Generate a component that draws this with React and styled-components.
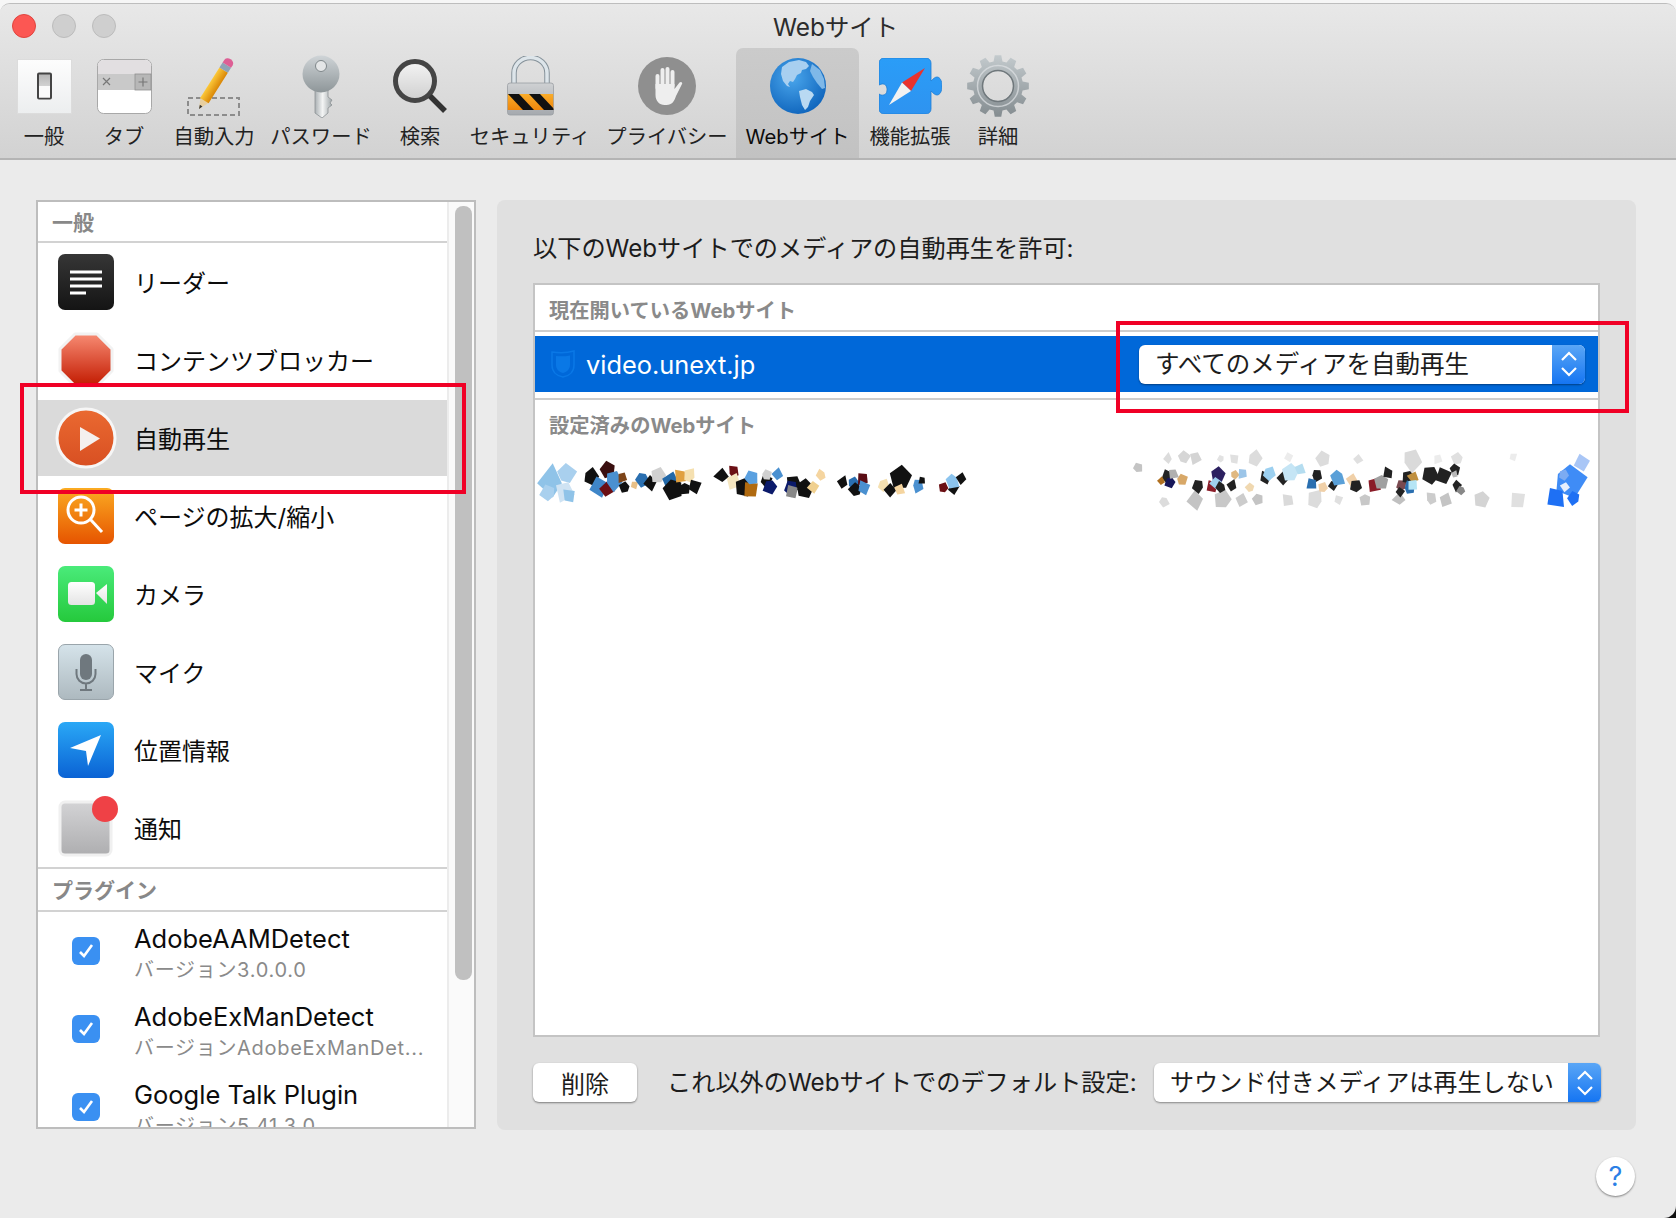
import React from "react";
import styled, { createGlobalStyle } from "styled-components";

const GlobalStyle = createGlobalStyle`
  html, body {
    margin: 0;
    padding: 0;
    background: #fff;
  }
  body {
    font-family: Inter, "Noto Sans CJK JP", sans-serif;
    color: #1c1c1c;
  }
  * {
    box-sizing: border-box;
  }
`;

const Page = styled.div`
  width: 1676px;
  height: 1218px;
  padding-top: 3px;
  background: linear-gradient(#f6f6f6 50%, #111 50%);
`;

const Window = styled.div`
  position: relative;
  height: 1215px;
  background: #ebebeb;
  border-top: 1px solid #bdbdbd;
  border-radius: 10px 10px 12px 0;
  overflow: hidden;
`;

const Toolbar = styled.header`
  height: 156px;
  background: linear-gradient(#e8e8e8, #d2d2d2);
  border-bottom: 2px solid #b4b4b4;
`;

const TitleRow = styled.div`
  position: relative;
  height: 44px;
  display: flex;
  align-items: center;
  justify-content: center;
`;

const TrafficLights = styled.div`
  position: absolute;
  left: 12px;
  top: 10px;
  display: flex;
  gap: 16px;
`;

const Light = styled.span`
  width: 24px;
  height: 24px;
  border-radius: 50%;
  background: ${(p) => (p.$close ? "#fc5753" : "#cfcfcf")};
  border: 1px solid ${(p) => (p.$close ? "#e0443e" : "#bcbcbc")};
`;

const Title = styled.h1`
  margin: 2px 0 0 -5px;
  font-size: 24.4px;
  font-weight: 400;
  line-height: 30px;
  color: #2c2c2c;
`;

const Tabs = styled.nav`
  display: flex;
  padding-left: 4px;
`;

const Tab = styled.div`
  width: ${(p) => p.$w}px;
  height: 110px;
  flex: none;
  padding-top: 6px;
  display: flex;
  flex-direction: column;
  align-items: center;
  border-radius: 7px 7px 0 0;
  background: ${(p) => (p.$active ? "linear-gradient(#cbcbcb, #c2c2c2)" : "transparent")};
`;

const TabIcon = styled.div`
  height: 64px;
  display: flex;
  align-items: center;
  justify-content: center;
`;

const TabLabel = styled.span`
  margin-top: 7px;
  font-size: 20.3px;
  line-height: 24px;
  white-space: nowrap;
  color: ${(p) => (p.$active ? "#0c0c0c" : "#222")};
`;

const Content = styled.main`
  display: flex;
  gap: 21px;
  padding: 40px 40px 0 36px;
`;

const ListBox = styled.aside`
  width: 440px;
  height: 929px;
  flex: none;
  display: flex;
  border: 2px solid #bdbdbd;
  background: #fff;
  overflow: hidden;
`;

const List = styled.div`
  width: 411px;
  flex: none;
  border-right: 2px solid #ececec;
`;

const Scrollbar = styled.div`
  flex: 1;
  padding: 4px 2px 0 6px;
  background: #fafafa;
`;

const Thumb = styled.div`
  height: 774px;
  border-radius: 8px;
  background: #c0c0c0;
`;

const SectionHead = styled.div`
  height: ${(p) => p.$h}px;
  padding: 0 0 1px 14px;
  display: flex;
  align-items: center;
  font-size: 21px;
  font-weight: 700;
  color: #888;
  border-bottom: 2px solid #d2d2d2;
  border-top: ${(p) => (p.$ruled ? "2px solid #d2d2d2" : "0")};
`;

const Row = styled.div`
  height: 78px;
  display: flex;
  align-items: center;
  gap: 20px;
  padding-left: 20px;
  border-block: 1px solid transparent;
  background: ${(p) => (p.$selected ? "#dadada" : "transparent")};
  background-clip: padding-box;
`;

const RowLabel = styled.span`
  margin-top: 4px;
  font-size: 24px;
  line-height: 30px;
  color: #0c0c0c;
`;

const IconSlot = styled.div`
  width: 56px;
  height: 56px;
  flex: none;
  display: flex;
  align-items: center;
  justify-content: center;

  svg {
    overflow: visible;
  }
`;

const Check = styled.span`
  width: 28px;
  height: 28px;
  display: flex;
  align-items: center;
  justify-content: center;
  border-radius: 6px;
  background: #3a90f2;
`;

const PluginText = styled.div`
  padding-top: 6px;
  display: flex;
  flex-direction: column;
  gap: 5px;
  white-space: nowrap;
`;

const PluginName = styled.span`
  font-size: 25.5px;
  line-height: 28px;
  color: #0c0c0c;
`;

const PluginVersion = styled.span`
  font-size: 20px;
  line-height: 25px;
  letter-spacing: 0.7px;
  color: #8a8a8a;
`;

const Panel = styled.section`
  width: 1139px;
  height: 930px;
  flex: none;
  display: flex;
  flex-direction: column;
  padding: 33px 35px 28px 36px;
  border-radius: 8px;
  background: #e0e0e0;
`;

const PanelTitle = styled.h2`
  margin: 0 0 18px;
  font-size: 24.2px;
  font-weight: 400;
  line-height: 32px;
  color: #1c1c1c;
`;

const SiteTable = styled.div`
  height: 754px;
  flex: none;
  width: 1067px;
  border: 2px solid #c4c4c4;
  background: #fff;
`;

const TableHead = styled.div`
  height: ${(p) => p.$h}px;
  padding: ${(p) => (p.$ruled ? "2px" : "0")} 0 ${(p) => (p.$ruled ? "0" : "4px")} 14px;
  display: flex;
  align-items: center;
  font-size: 20.3px;
  font-weight: 700;
  color: #8a8a8a;
  border-bottom: ${(p) => (p.$ruled ? "2px solid #cdcdcd" : "0")};
`;

const ActiveSite = styled.div`
  height: 56px;
  margin-top: 4px;
  padding: 0 13px 0 16px;
  display: flex;
  align-items: center;
  background: #0068d9;
`;

const SiteName = styled.span`
  margin: 2px 0 0 11px;
  font-size: 25.4px;
  line-height: 32px;
  color: #fff;
`;

const TableRule = styled.div`
  height: 2px;
  margin-top: 6px;
  background: #cdcdcd;
`;

const SavedSite = styled.div`
  height: 54px;
  padding: 0 9px 0 7px;
  display: flex;
  align-items: center;
  justify-content: space-between;
`;

const SelectBox = styled.div`
  width: ${(p) => p.$w}px;
  height: 39px;
  margin-left: auto;
  flex: none;
  display: flex;
  align-items: center;
  justify-content: space-between;
  padding-left: 16px;
  font-size: ${(p) => p.$size}px;
  line-height: 30px;
  color: #1c1c1c;
  white-space: nowrap;
  background: #fff;
  border-radius: 6px;
  box-shadow: 0 1px 2px rgba(0, 0, 0, 0.4);
  overflow: hidden;
`;

const Stepper = styled.span`
  width: 33px;
  height: 100%;
  flex: none;
  display: flex;
  align-items: center;
  justify-content: center;
  background: linear-gradient(#5aa6f6, #1575f2);
`;

const PanelFooter = styled.div`
  margin-top: 26px;
  display: flex;
  align-items: center;
`;

const DeleteButton = styled.button`
  width: 104px;
  height: 39px;
  padding: 0;
  flex: none;
  border: 0;
  border-radius: 6px;
  background: #fff;
  box-shadow: 0 1px 2px rgba(0, 0, 0, 0.45);
  font: inherit;
  font-size: 24px;
  color: #1c1c1c;
`;

const FooterLabel = styled.span`
  margin-left: 30px;
  font-size: 24.2px;
  line-height: 30px;
  white-space: nowrap;
  color: #1c1c1c;
`;

const HelpRow = styled.div`
  display: flex;
  justify-content: flex-end;
  padding: 27px 41px 0 0;
`;

const HelpButton = styled.button`
  width: 39px;
  height: 39px;
  padding: 0;
  border: 0;
  border-radius: 50%;
  background: #fff;
  box-shadow: 0 1px 2px rgba(0, 0, 0, 0.45);
  font: inherit;
  font-size: 27px;
  color: #2b7fe6;
`;

const Callout = styled.div`
  position: absolute;
  left: ${(p) => p.$x}px;
  top: ${(p) => p.$y}px;
  width: ${(p) => p.$w}px;
  height: ${(p) => p.$h}px;
  border: 4px solid #f00026;
  pointer-events: none;
`;

const Defs = ({ id, from, to, radial }) =>
  radial ? (
    <radialGradient id={id} cx="0.4" cy="0.35" r="0.75">
      <stop offset="0" stopColor={from} />
      <stop offset="1" stopColor={to} />
    </radialGradient>
  ) : (
    <linearGradient id={id} x1="0" y1="0" x2="0" y2="1">
      <stop offset="0" stopColor={from} />
      <stop offset="1" stopColor={to} />
    </linearGradient>
  );

const GeneralIcon = () => (
  <svg width="55" height="55" viewBox="0 0 55 55">
    <defs>
      <Defs id="genBg" from="#fdfdfd" to="#eceeef" />
      <Defs id="genSw" from="#b4b4b4" to="#efefef" />
    </defs>
    <rect x="0.5" y="0.5" width="54" height="54" fill="url(#genBg)" stroke="#dcdcdc" />
    <rect x="21" y="14.5" width="13" height="25" rx="1" fill="url(#genSw)" stroke="#444" strokeWidth="2" />
    <rect x="22" y="27" width="11" height="11.5" fill="#fafafa" />
  </svg>
);

const TabsIcon = () => (
  <svg width="55" height="55" viewBox="0 0 55 55">
    <rect x="0.5" y="0.5" width="54" height="54" rx="6" fill="#fff" stroke="#a8a8a8" />
    <path d="M1 15V6.500a5.500 5.500 0 0 1 5.500-5.500h42a5.500 5.500 0 0 1 5.500 5.500V15z" fill="#e2dfe1" />
    <rect x="1" y="15" width="37" height="16" fill="#c9c9c9" />
    <rect x="38" y="15" width="16" height="16" fill="#b7b7b7" stroke="#8f8f8f" strokeWidth="0.8" />
    <path d="M6 19l7 7M13 19l-7 7" stroke="#777" strokeWidth="1.200" />
    <path d="M46 18.500v9M41.500 23h9" stroke="#777" strokeWidth="1.200" />
  </svg>
);

const PencilIcon = () => (
  <svg width="54" height="60" viewBox="0 0 54 60">
    <defs>
      <linearGradient id="penBody" x1="0" x2="1" y1="0" y2="0">
        <stop offset="0" stopColor="#fcc93a" />
        <stop offset="1" stopColor="#d98606" />
      </linearGradient>
    </defs>
    <rect x="1" y="42" width="51" height="17" fill="none" stroke="#8c8c8c" strokeWidth="2" strokeDasharray="5 3" />
    <g transform="rotate(32.4 12 53)">
      <path d="M12 53L7 42h10z" fill="#e8cfa0" />
      <path d="M12 53l-1.500-4h3z" fill="#333" />
      <rect x="7" y="7" width="10" height="36" fill="url(#penBody)" />
      <rect x="7" y="1" width="10" height="6" fill="#8fa3b6" />
      <path d="M7 1v-3a5 4 0 0 1 10 0v3z" fill="#dd5f95" />
    </g>
  </svg>
);

const KeyIcon = () => (
  <svg width="38" height="63" viewBox="0 0 38 63">
    <defs>
      <Defs id="keyHead" from="#cfd4d7" to="#8e9699" />
      <linearGradient id="keyShaft" x1="0" x2="1" y1="0" y2="0">
        <stop offset="0" stopColor="#aab0b3" />
        <stop offset="0.45" stopColor="#f4f5f5" />
        <stop offset="1" stopColor="#9ea5a8" />
      </linearGradient>
    </defs>
    <path d="M13 34h13v8l4 3-2 3 2 2-4 3v5l-6 5-7-5z" fill="url(#keyShaft)" stroke="#8d9396" strokeWidth="0.8" />
    <circle cx="19" cy="19" r="18.500" fill="url(#keyHead)" />
    <circle cx="19" cy="11" r="5.500" fill="#e4e6e7" stroke="#7f878a" />
  </svg>
);

const SearchIcon = () => (
  <svg width="54" height="54" viewBox="0 0 54 54">
    <defs>
      <Defs id="lensFill" from="#f4f4f4" to="#cfcfcf" />
    </defs>
    <circle cx="22" cy="22" r="19.500" fill="url(#lensFill)" stroke="#454545" strokeWidth="5" />
    <path d="M37 37l15 15" stroke="#333" strokeWidth="5.500" />
  </svg>
);

const LockIcon = () => (
  <svg width="47" height="60" viewBox="0 0 47 60">
    <defs>
      <clipPath id="lockBand">
        <rect x="0.500" y="38" width="46" height="16" />
      </clipPath>
      <Defs id="lockBody" from="#cfd1d3" to="#a5a9ae" />
      <Defs id="lockBandFill" from="#f9ac2a" to="#ee860c" />
    </defs>
    <path d="M7 28V17a16.500 15.500 0 0 1 33 0v11" fill="none" stroke="#87939b" strokeWidth="5.500" />
    <path d="M7 28V17a16.500 15.500 0 0 1 33 0v11" fill="none" stroke="#dde5ea" strokeWidth="3.500" />
    <rect x="0.500" y="27" width="46" height="32" rx="2.500" fill="url(#lockBody)" stroke="#9a9ea3" strokeWidth="0.8" />
    <g clipPath="url(#lockBand)">
      <rect x="0.500" y="38" width="46" height="16" fill="url(#lockBandFill)" />
      <path d="M1 38h11l15 16H16zM22 38h11l15 16H37z" fill="#111" />
    </g>
  </svg>
);

const HandIcon = () => (
  <svg width="58" height="58" viewBox="0 0 58 58">
    <circle cx="29" cy="29" r="29" fill="#8f8f8f" />
    <g stroke="#eeeeee" strokeWidth="4" strokeLinecap="round" fill="none">
      <path d="M19.500 19v12" />
      <path d="M24.500 13v16" />
      <path d="M29.500 12v16" />
      <path d="M34.500 15v14" />
    </g>
    <path d="M17.500 27h19v5l5-6.500c1.500-1.500 3.500 0 2.500 1.500l-6 12c-1.500 5-4 9-9.500 9h-2c-5 0-9-4-9-10z" fill="#eeeeee" />
  </svg>
);

const GlobeIcon = () => (
  <svg width="56" height="56" viewBox="0 0 56 56">
    <defs>
      <Defs id="globeSea" from="#4aa6ec" to="#0a5fb8" radial />
    </defs>
    <circle cx="28" cy="28" r="28" fill="url(#globeSea)" />
    <path d="M12 9l7-5 10-2 7 2 3 4-3 3-4 1-1 3-4 2-2 4-2 3-3-1-2 3 2 3-3-1-4-5-2-7z" fill="#a8cff0" />
    <path d="M29 33l7-2 6 3 2 3-4 6-2 6-3 3-3-5-2-8z" fill="#b9d9f2" />
    <path d="M42 6l8 6 4 9 1 9-3 1-5-6-4-6-3-6z" fill="#7fb8e8" />
  </svg>
);

const ExtensionIcon = () => (
  <svg width="63" height="56" viewBox="0 0 63 56">
    <defs>
      <Defs id="puzzleFill" from="#2a9df8" to="#2e93f0" />
    </defs>
    <path
      d="M5 0h42a5 5 0 0 1 5 5v18c2-2 4-4 6-4 3 0 5 4 5 9s-2 9-5 9c-2 0-4-2-6-4v18a5 5 0 0 1-5 5H5a5 5 0 0 1-5-5V36c3 2 5 1 6.500 0 2-1.500 2-7 0-9-1.500-1.500-3.500-1.500-6.500 0V5a5 5 0 0 1 5-5z"
      fill="url(#puzzleFill)"
      stroke="#1f7fd6"
      strokeWidth="0.8"
    />
    <path d="M46 10L23 24.500l9 8.500z" fill="#e8322e" />
    <path d="M10 47l13-22.500 9 8.500z" fill="#f2f2f2" />
  </svg>
);

const gearPath = (() => {
  const teeth = 12;
  const points = [];
  for (let i = 0; i < teeth; i++) {
    const a = (i / teeth) * Math.PI * 2;
    const step = (Math.PI * 2) / teeth;
    [
      [25, -0.34],
      [31, -0.2],
      [31, 0.2],
      [25, 0.34],
    ].forEach(([r, k]) => {
      const t = a + k * step;
      points.push(`${(31 + r * Math.cos(t)).toFixed(2)},${(31 + r * Math.sin(t)).toFixed(2)}`);
    });
  }
  return points.join(" ");
})();

const GearIcon = () => (
  <svg width="62" height="62" viewBox="0 0 62 62">
    <defs>
      <Defs id="gearFill" from="#c3cacd" to="#848c90" />
    </defs>
    <mask id="gearHole">
      <rect width="62" height="62" fill="#fff" />
      <circle cx="31" cy="31" r="15" fill="#000" />
    </mask>
    <polygon points={gearPath} fill="url(#gearFill)" mask="url(#gearHole)" />
    <circle cx="31" cy="31" r="15.500" fill="none" stroke="#70787c" strokeWidth="1.500" />
    <circle cx="31" cy="31" r="20.500" fill="none" stroke="#dfe3e5" strokeWidth="1.500" opacity="0.7" />
  </svg>
);

const ReaderIcon = () => (
  <svg width="56" height="56" viewBox="0 0 56 56">
    <defs>
      <Defs id="readerBg" from="#363636" to="#141414" />
    </defs>
    <rect width="56" height="56" rx="7" fill="url(#readerBg)" />
    <path d="M12 18h32M12 25h32M12 32h32M12 39h16" stroke="#fff" strokeWidth="3" />
  </svg>
);

const BlockerIcon = () => (
  <svg width="56" height="56" viewBox="0 0 56 56">
    <defs>
      <Defs id="stopBg" from="#f78b73" to="#c21a00" />
    </defs>
    <path
      d="M17 2h22l15 15v22L39 54H17L2 39V17z"
      fill="url(#stopBg)"
      stroke="#f2f2f2"
      strokeWidth="3"
      strokeLinejoin="round"
    />
  </svg>
);

const PlayIcon = () => (
  <svg width="56" height="56" viewBox="0 0 56 56">
    <defs>
      <Defs id="playBg" from="#ea6a31" to="#d84f22" />
    </defs>
    <circle cx="28" cy="28" r="29" fill="url(#playBg)" stroke="#f6f6f6" strokeWidth="3" />
    <path d="M22 17l20 11.500L22 41z" fill="#f4f0ee" />
  </svg>
);

const ZoomIcon = () => (
  <svg width="56" height="56" viewBox="0 0 56 56">
    <defs>
      <Defs id="zoomBg" from="#fbab22" to="#e65400" />
    </defs>
    <rect width="56" height="56" rx="7" fill="url(#zoomBg)" />
    <circle cx="23" cy="22" r="13" fill="none" stroke="#fff" strokeWidth="3" />
    <path d="M32.500 31.500L44 44" stroke="#fff" strokeWidth="3" />
    <path d="M23 15.500v13M16.500 22h13" stroke="#fff" strokeWidth="3" />
  </svg>
);

const CameraIcon = () => (
  <svg width="56" height="56" viewBox="0 0 56 56">
    <defs>
      <Defs id="camBg" from="#4aeb7a" to="#25c93c" />
      <Defs id="camBody" from="#ffffff" to="#e4e4e4" />
    </defs>
    <rect width="56" height="56" rx="7" fill="url(#camBg)" />
    <rect x="10" y="16" width="27" height="23" rx="3.500" fill="url(#camBody)" />
    <path d="M38 27l11-9v20z" fill="url(#camBody)" />
  </svg>
);

const MicIcon = () => (
  <svg width="56" height="56" viewBox="0 0 56 56">
    <defs>
      <Defs id="micBg" from="#d5e3ea" to="#adb9bf" />
    </defs>
    <rect x="0.500" y="0.500" width="55" height="55" rx="6.500" fill="url(#micBg)" stroke="#9aa5ab" />
    <rect x="22" y="10" width="12" height="26" rx="6" fill="#6f787e" />
    <path d="M18.500 25v5a9.500 9.500 0 0 0 19 0v-5M28 40v5M22 46h12" fill="none" stroke="#6f787e" strokeWidth="2" />
  </svg>
);

const LocationIcon = () => (
  <svg width="56" height="56" viewBox="0 0 56 56">
    <defs>
      <Defs id="locBg" from="#2aa8f6" to="#0a62d4" />
    </defs>
    <rect width="56" height="56" rx="7" fill="url(#locBg)" />
    <path d="M43 13L12 26l16 3 2 15z" fill="#fff" />
  </svg>
);

const NoticeIcon = () => (
  <svg width="56" height="56" viewBox="0 0 56 56">
    <defs>
      <Defs id="noteBg" from="#d3d3d5" to="#aeaeb0" />
    </defs>
    <rect x="2" y="2" width="51" height="53" rx="5" fill="url(#noteBg)" stroke="#f0f0f0" strokeWidth="3" />
    <circle cx="47" cy="9" r="13" fill="#ef4146" />
  </svg>
);

const CheckMark = () => (
  <svg width="18" height="18" viewBox="0 0 18 18">
    <path d="M3 10l4 4 8-11" fill="none" stroke="#fff" strokeWidth="2.600" />
  </svg>
);

const ShieldIcon = () => (
  <svg width="24" height="28" viewBox="0 0 24 28">
    <path d="M1 2c7 1 15 1 22-1v14c0 7-5 11-11 12C6 26 1 22 1 15z" fill="none" stroke="#0a78e6" strokeWidth="1.500" />
    <path d="M5 6c5 .5 9 .5 14-.5V15c0 4-3 7-7 8-4-1-7-4-7-8z" fill="#0a78e6" />
  </svg>
);

const Chevrons = () => (
  <svg width="18" height="28" viewBox="0 0 18 28">
    <path d="M2 10l7-7 7 7M2 18l7 7 7-7" fill="none" stroke="#fff" strokeWidth="2.200" />
  </svg>
);

// hand placed from the blurred row, coordinates are zoomed image units
const MOSAIC_LEFT = [
  [95, 790, 32, "#8fc3e8"], [130, 765, 22, "#a9d0ee"], [130, 810, 26, "#cfe3f3"], [85, 820, 18, "#a9d0ee"], [140, 830, 14, "#8fc3e8"],
  [200, 770, 15, "#111"], [225, 800, 17, "#3f86c8"], [250, 750, 14, "#3a0f10"], [245, 810, 14, "#6b0f14"], [262, 780, 18, "#4a90d0"],
  [290, 770, 13, "#7d4418"], [298, 803, 13, "#111"], [322, 795, 10, "#e8c088"], [345, 775, 16, "#2a6fb0"], [370, 788, 13, "#111"],
  [392, 768, 14, "#d0d0d0"], [425, 785, 16, "#2268a8"], [432, 806, 18, "#111"], [455, 768, 14, "#e0a040"], [480, 770, 14, "#f5e0b0"],
  [490, 800, 18, "#111"], [465, 803, 14, "#111"], [570, 770, 16, "#111"], [600, 758, 12, "#6b0f14"], [600, 785, 14, "#f5e6c0"],
  [630, 800, 16, "#111"], [650, 810, 15, "#b06a10"], [650, 775, 13, "#5aa0e0"], [690, 782, 15, "#111"], [705, 797, 16, "#0b1a6a"],
  [725, 765, 15, "#4a90d0"], [692, 765, 12, "#d0d0d0"], [770, 787, 18, "#111"], [765, 803, 14, "#0b1a6a"], [765, 816, 12, "#888"],
  [800, 806, 16, "#111"], [825, 800, 11, "#f0d090"], [848, 765, 10, "#f5d5a0"], [908, 790, 14, "#111"], [935, 790, 14, "#2a6fb0"],
  [965, 775, 16, "#5a0d14"], [945, 812, 15, "#111"], [965, 805, 13, "#4a90d0"], [1020, 795, 11, "#f5e0b0"], [1040, 810, 11, "#111"],
  [1070, 775, 20, "#111"], [1065, 810, 11, "#f5d5a0"], [1115, 795, 13, "#4a90d0"], [1130, 780, 10, "#111"], [1190, 805, 12, "#6b0f14"],
  [1215, 805, 13, "#111"], [1215, 780, 15, "#8cc4ee"], [1240, 775, 10, "#111"],
];

const MOSAIC_RIGHT = [
  [245, 478, 11, "#dcdcdc"], [285, 475, 14, "#d6d6d6"], [320, 472, 16, "#d4d4d4"], [390, 478, 8, "#e2e2e2"], [425, 480, 10, "#e0e0e0"],
  [480, 476, 14, "#dcdcdc"], [575, 472, 8, "#ececec"], [670, 478, 13, "#dcdcdc"], [765, 480, 9, "#e0e0e0"], [910, 480, 20, "#dadada"],
  [985, 476, 12, "#ececec"], [1040, 478, 14, "#e0e0e0"], [1190, 472, 10, "#ececec"],
  [232, 603, 11, "#dcdcdc"], [320, 600, 16, "#c4c4c4"], [395, 600, 16, "#c8c8c8"], [445, 600, 11, "#cccccc"], [490, 597, 10, "#c4c4c4"],
  [575, 600, 13, "#dadada"], [650, 602, 18, "#dcdcdc"], [710, 600, 12, "#e0e0e0"], [785, 597, 14, "#c8c8c8"], [880, 600, 14, "#c0c0c0"],
  [965, 598, 12, "#cccccc"], [1005, 600, 12, "#c4c4c4"], [1105, 597, 14, "#d4d4d4"], [1205, 602, 15, "#e0e0e0"],
  [160, 505, 9, "#c4c4c4"], [240, 530, 16, "#222"], [250, 545, 12, "#17175a"], [225, 545, 10, "#b07020"], [280, 540, 13, "#d8a868"],
  [258, 520, 11, "#b0b0b0"], [328, 558, 12, "#222"], [365, 560, 11, "#8a1c28"], [380, 525, 13, "#2c2060"], [375, 548, 11, "#9fd0ee"],
  [390, 562, 10, "#222"], [420, 560, 13, "#222"], [425, 525, 10, "#e0b880"], [450, 520, 13, "#9cc5e8"], [470, 565, 10, "#f0d8b0"],
  [510, 535, 12, "#222"], [520, 520, 12, "#9cd0f0"], [560, 535, 11, "#222"], [580, 520, 15, "#c5e5f5"], [605, 510, 11, "#b5ddf0"],
  [650, 525, 12, "#222"], [640, 550, 15, "#2a6fb0"], [670, 565, 12, "#f0d0a8"], [695, 555, 12, "#222"], [710, 530, 16, "#5aa0d8"],
  [750, 540, 11, "#f0d0a8"], [760, 560, 11, "#222"], [810, 555, 13, "#8a1c28"], [830, 545, 13, "#a0a0a0"], [850, 520, 12, "#222"],
  [885, 560, 12, "#7a4a50"], [880, 575, 12, "#222"], [905, 530, 15, "#222"], [918, 535, 12, "#c09040"], [905, 565, 12, "#2a6fb0"],
  [915, 555, 10, "#b5e5f5"], [965, 525, 15, "#222"], [1000, 530, 15, "#222"], [1030, 510, 10, "#222"], [1035, 555, 12, "#222"],
  [1050, 570, 10, "#888"], [1030, 525, 9, "#b8b8b8"],
  [1340, 540, 36, "#3f8cf6"], [1310, 590, 20, "#1e70f4"], [1360, 595, 12, "#1e70f4"], [1380, 490, 14, "#a9c6f6"], [1330, 525, 9, "#7cabf2"], [1335, 560, 9, "#e6eefc"],
];

// small repeatable jitter so the shards keep the same shape on every render
const shard = ([x, y, r], i) => {
  const sides = 4 + (i % 2);
  const out = [];
  for (let k = 0; k < sides; k++) {
    const a = (k / sides) * Math.PI * 2 + i;
    const jitter = 0.8 + 0.9 * Math.abs(Math.sin(i * 12.9 + k * 78.2));
    out.push(`${(x + r * jitter * Math.cos(a)).toFixed(1)},${(y + r * jitter * 1.200 * Math.sin(a)).toFixed(1)}`);
  }
  return out.join(" ");
};

const Mosaic = ({ pieces, box, width, height, drop }) => (
  <svg width={width} height={height} viewBox={box} preserveAspectRatio="none" style={{ marginTop: drop, overflow: "visible" }}>
    {pieces.map((p, i) => (
      <polygon key={i} points={shard(p, i)} fill={p[3]} />
    ))}
  </svg>
);

const TABS = [
  { label: "一般", w: 80, Icon: GeneralIcon },
  { label: "タブ", w: 80, Icon: TabsIcon },
  { label: "自動入力", w: 100, Icon: PencilIcon },
  { label: "パスワード", w: 114, Icon: KeyIcon },
  { label: "検索", w: 84, Icon: SearchIcon },
  { label: "セキュリティ", w: 136, Icon: LockIcon },
  { label: "プライバシー", w: 138, Icon: HandIcon },
  { label: "Webサイト", w: 123, Icon: GlobeIcon, active: true },
  { label: "機能拡張", w: 102, Icon: ExtensionIcon },
  { label: "詳細", w: 74, Icon: GearIcon },
];

const SETTINGS = [
  { label: "リーダー", Icon: ReaderIcon },
  { label: "コンテンツブロッカー", Icon: BlockerIcon },
  { label: "自動再生", Icon: PlayIcon, selected: true },
  { label: "ページの拡大/縮小", Icon: ZoomIcon },
  { label: "カメラ", Icon: CameraIcon },
  { label: "マイク", Icon: MicIcon },
  { label: "位置情報", Icon: LocationIcon },
  { label: "通知", Icon: NoticeIcon },
];

const PLUGINS = [
  { name: "AdobeAAMDetect", version: "バージョン3.0.0.0" },
  { name: "AdobeExManDetect", version: "バージョンAdobeExManDet..." },
  { name: "Google Talk Plugin", version: "バージョン5.41.3.0" },
];

const App = () => {
  return (
    <Page>
      <GlobalStyle />
      <Window>
        <Toolbar>
          <TitleRow>
            <TrafficLights>
              <Light $close />
              <Light />
              <Light />
            </TrafficLights>
            <Title>Webサイト</Title>
          </TitleRow>
          <Tabs>
            {TABS.map(({ label, w, Icon, active }) => (
              <Tab key={label} $w={w} $active={active}>
                <TabIcon>
                  <Icon />
                </TabIcon>
                <TabLabel $active={active}>{label}</TabLabel>
              </Tab>
            ))}
          </Tabs>
        </Toolbar>

        <Content>
          <ListBox>
            <List>
              <SectionHead $h={41}>一般</SectionHead>
              {SETTINGS.map(({ label, Icon, selected }) => (
                <Row key={label} $selected={selected}>
                  <IconSlot>
                    <Icon />
                  </IconSlot>
                  <RowLabel>{label}</RowLabel>
                </Row>
              ))}
              <SectionHead $h={45} $ruled>
                プラグイン
              </SectionHead>
              {PLUGINS.map((plugin) => (
                <Row key={plugin.name}>
                  <IconSlot>
                    <Check>
                      <CheckMark />
                    </Check>
                  </IconSlot>
                  <PluginText>
                    <PluginName>{plugin.name}</PluginName>
                    <PluginVersion>{plugin.version}</PluginVersion>
                  </PluginText>
                </Row>
              ))}
            </List>
            <Scrollbar>
              <Thumb />
            </Scrollbar>
          </ListBox>

          <Panel>
            <PanelTitle>以下のWebサイトでのメディアの自動再生を許可:</PanelTitle>
            <SiteTable>
              <TableHead $h={47} $ruled>
                現在開いているWebサイト
              </TableHead>
              <ActiveSite>
                <ShieldIcon />
                <SiteName>video.unext.jp</SiteName>
                <SelectBox $w={446} $size={24.5}>
                  すべてのメディアを自動再生
                  <Stepper>
                    <Chevrons />
                  </Stepper>
                </SelectBox>
              </ActiveSite>
              <TableRule />
              <TableHead $h={52}>設定済みのWebサイト</TableHead>
              <SavedSite>
                <Mosaic pieces={MOSAIC_LEFT} box="65 735 1190 105" width={425} height={35} drop={6} />
                <Mosaic pieces={MOSAIC_RIGHT} box="150 460 1250 155" width={455} height={52} drop={0} />
              </SavedSite>
            </SiteTable>
            <PanelFooter>
              <DeleteButton>削除</DeleteButton>
              <FooterLabel>これ以外のWebサイトでのデフォルト設定:</FooterLabel>
              <SelectBox $w={447} $size={24.1}>
                サウンド付きメディアは再生しない
                <Stepper>
                  <Chevrons />
                </Stepper>
              </SelectBox>
            </PanelFooter>
          </Panel>
        </Content>

        <HelpRow>
          <HelpButton>?</HelpButton>
        </HelpRow>

        <Callout $x={20} $y={379} $w={446} $h={111} />
        <Callout $x={1116} $y={317} $w={513} $h={92} />
      </Window>
    </Page>
  );
};

export default App;
